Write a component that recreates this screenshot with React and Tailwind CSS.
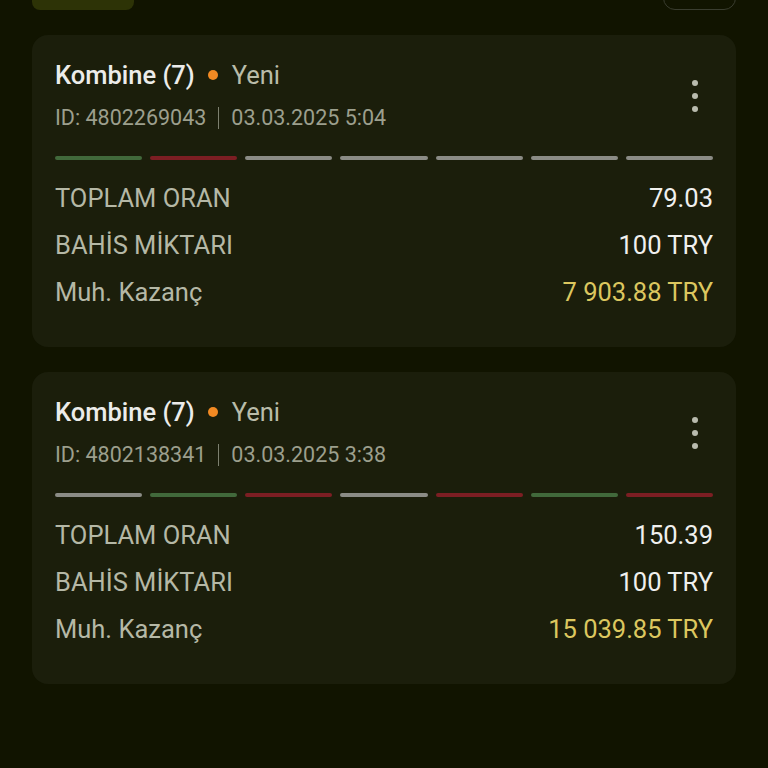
const tickets = [
  {
    id: "4802269043",
    date: "03.03.2025 5:04",
    legs: ["win", "lose", "open", "open", "open", "open", "open"],
    odds: "79.03",
    stake: "100 TRY",
    payout: "7 903.88 TRY",
  },
  {
    id: "4802138341",
    date: "03.03.2025 3:38",
    legs: ["open", "win", "lose", "open", "lose", "win", "lose"],
    odds: "150.39",
    stake: "100 TRY",
    payout: "15 039.85 TRY",
  },
];

const legColor = {
  win: "bg-[#41693b]",
  lose: "bg-[#7c1e23]",
  open: "bg-[#8b8c86]",
};

function Kebab() {
  return (
    <button className="flex flex-col items-center gap-[7px] px-2 py-1">
      <span className="w-[6px] h-[6px] rounded-full bg-[#b9bbae]" />
      <span className="w-[6px] h-[6px] rounded-full bg-[#b9bbae]" />
      <span className="w-[6px] h-[6px] rounded-full bg-[#b9bbae]" />
    </button>
  );
}

function TicketCard({ t }) {
  return (
    <section className="bg-[#1b1e0b] rounded-2xl px-[23px] pt-[24px] pb-[31px]">
      {/* header */}
      <div className="flex items-center justify-between">
        <div>
          <div className="flex items-center h-[32px] text-[25.5px]">
            <span className="font-medium text-[#ececea]">Kombine (7)</span>
            <span className="w-[10px] h-[10px] rounded-full bg-[#f28a23] ml-[13px] mr-[14px]" />
            <span className="text-[#b9bca9]">Yeni</span>
          </div>
          <div className="flex items-center h-[28px] mt-[13px] text-[21.5px] text-[#9c9f8d]">
            <span>ID: {t.id}</span>
            <span className="w-[1px] h-[22px] bg-[#7d806f] mx-[12px]" />
            <span>{t.date}</span>
          </div>
        </div>
        <div className="mr-[7px]">
          <Kebab />
        </div>
      </div>

      {/* legs */}
      <div className="flex gap-2 mt-[24px]">
        {t.legs.map((l, i) => (
          <div key={i} className={`flex-1 h-[4px] rounded-full ${legColor[l]}`} />
        ))}
      </div>

      {/* rows */}
      <div className="mt-[15px] text-[25.5px]">
        <div className="flex items-center justify-between h-[47px]">
          <span className="text-[#b5b8a6]">TOPLAM ORAN</span>
          <span className="text-[#f0f0ee]">{t.odds}</span>
        </div>
        <div className="flex items-center justify-between h-[47px]">
          <span className="text-[#b5b8a6]">BAHİS MİKTARI</span>
          <span className="text-[#f0f0ee]">{t.stake}</span>
        </div>
        <div className="flex items-center justify-between h-[47px]">
          <span className="text-[#b5b8a6]">Muh. Kazanç</span>
          <span className="text-[#dcc75f]">{t.payout}</span>
        </div>
      </div>
    </section>
  );
}

export default function App() {
  return (
    <div
      className="min-h-[768px] bg-[#111400] px-8 overflow-hidden"
      style={{ fontFamily: "Roboto, 'Noto Sans', sans-serif" }}
    >
      {/* top bar, mostly scrolled away */}
      <div className="flex justify-between items-end mt-[-30px] h-[40px]">
        <div className="w-[102px] h-[40px] rounded-lg bg-[#2d3306]" />
        <div className="w-[73px] h-[40px] rounded-xl border border-[#3a3d2f]" />
      </div>

      <div className="flex flex-col gap-[25px] mt-[25px]">
        {tickets.map((t) => (
          <TicketCard key={t.id} t={t} />
        ))}
      </div>
    </div>
  );
}
